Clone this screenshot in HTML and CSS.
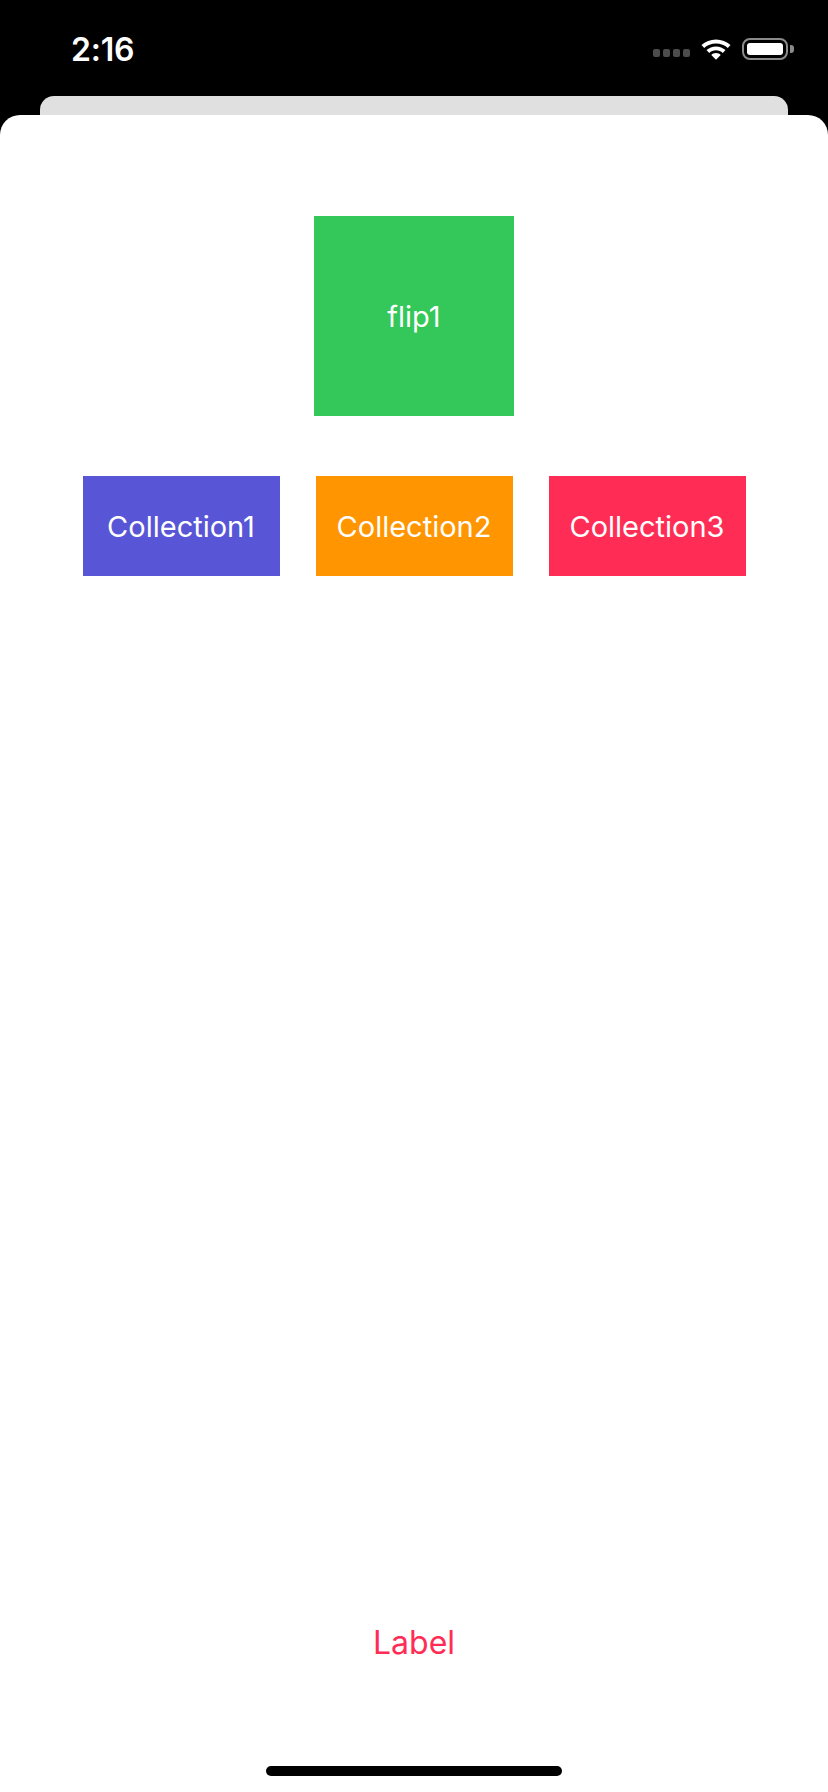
FILE: index.html
```html
<!DOCTYPE html>
<html>
<head>
<meta charset="utf-8">
<link rel="stylesheet" href="styles.css">
</head>
<body>
<div class="screen">
  <div class="status-bar">
    <span class="time">2:16</span>
    <div class="status-icons">
      <div class="signal"><i></i><i></i><i></i><i></i></div>
      <svg class="wifi" width="32" height="23" viewBox="0 0 32 23">
        <path d="M16 2.5C10.4 2.5 5.3 4.6 1.5 8.1L4.2 10.9C7.3 8.1 11.4 6.4 16 6.4C20.6 6.4 24.7 8.1 27.8 10.9L30.5 8.1C26.7 4.6 21.6 2.5 16 2.5Z" fill="#fff"/>
        <path d="M16 9.4C12.3 9.4 9 10.8 6.5 13.1L9.2 15.9C11 14.2 13.4 13.2 16 13.2C18.6 13.2 21 14.2 22.8 15.9L25.5 13.1C23 10.8 19.7 9.4 16 9.4Z" fill="#fff"/>
        <path d="M16 16.1C14.1 16.1 12.5 16.8 11.3 18L16 22.8L20.7 18C19.5 16.8 17.9 16.1 16 16.1Z" fill="#fff"/>
      </svg>
      <div class="battery">
        <div class="battery-body"><div class="battery-fill"></div></div>
        <div class="battery-cap"></div>
      </div>
    </div>
  </div>
  <div class="back-card"></div>
  <div class="card">
    <div class="flip">flip1</div>
    <div class="collections">
      <div class="coll coll-1">Collection1</div>
      <div class="coll coll-2">Collection2</div>
      <div class="coll coll-3">Collection3</div>
    </div>
    <div class="spacer"></div>
    <div class="label">Label</div>
    <div class="home-indicator"></div>
  </div>
</div>
</body>
</html>
```
FILE: styles.css
```css
html, body {
  margin: 0;
  padding: 0;
  background: #000;
}
.screen {
  width: 828px;
  height: 1792px;
  display: flex;
  flex-direction: column;
  font-family: "Inter", "Noto Sans", sans-serif;
  overflow: hidden;
}
.status-bar {
  height: 96px;
  display: flex;
  align-items: flex-start;
  justify-content: space-between;
  box-sizing: border-box;
  padding: 34px 34px 0 71px;
}
.time {
  color: #fff;
  font-size: 32px;
  font-weight: 600;
  line-height: 32px;
  letter-spacing: -0.2px;
}
.status-icons {
  display: flex;
  align-items: center;
  padding-top: 3px;
}
.signal {
  display: flex;
  gap: 3px;
  margin-right: 10px;
  margin-top: 9px;
}
.signal i {
  display: block;
  width: 7px;
  height: 8px;
  border-radius: 2px;
  background: #4c4c4c;
}
.wifi {
  display: block;
  margin-right: 10px;
}
.battery {
  display: flex;
  align-items: center;
}
.battery-body {
  width: 46px;
  height: 22px;
  box-sizing: border-box;
  border: 2px solid #8a8a8a;
  border-radius: 8px;
  padding: 3px;
}
.battery-fill {
  width: 100%;
  height: 100%;
  background: #fff;
  border-radius: 3px;
}
.battery-cap {
  width: 4px;
  height: 8px;
  margin-left: 2px;
  background: #8a8a8a;
  border-radius: 0 3px 3px 0;
}
.back-card {
  height: 19px;
  margin: 0 40px;
  background: #e0e0e0;
  border-radius: 14px 14px 0 0;
}
.card {
  flex: 1;
  background: #fff;
  border-radius: 20px 20px 0 0;
  display: flex;
  flex-direction: column;
  align-items: center;
  padding-top: 101px;
  padding-bottom: 16px;
}
.flip {
  width: 200px;
  height: 200px;
  background: #34c759;
  color: #fff;
  font-size: 29px;
  display: flex;
  align-items: center;
  justify-content: center;
}
.collections {
  margin-top: 60px;
  display: flex;
  gap: 36px;
}
.coll {
  width: 197px;
  height: 100px;
  color: #fff;
  font-size: 29px;
  display: flex;
  align-items: center;
  justify-content: center;
}
.coll-1 { background: #5856d6; }
.coll-2 { background: #ff9500; }
.coll-3 { background: #ff2d55; }
.spacer {
  flex: 1;
}
.label {
  color: #ff2d55;
  font-size: 32px;
  line-height: 40px;
  margin-bottom: 103px;
}
.home-indicator {
  width: 296px;
  height: 10px;
  border-radius: 5px;
  background: #000;
}
```
